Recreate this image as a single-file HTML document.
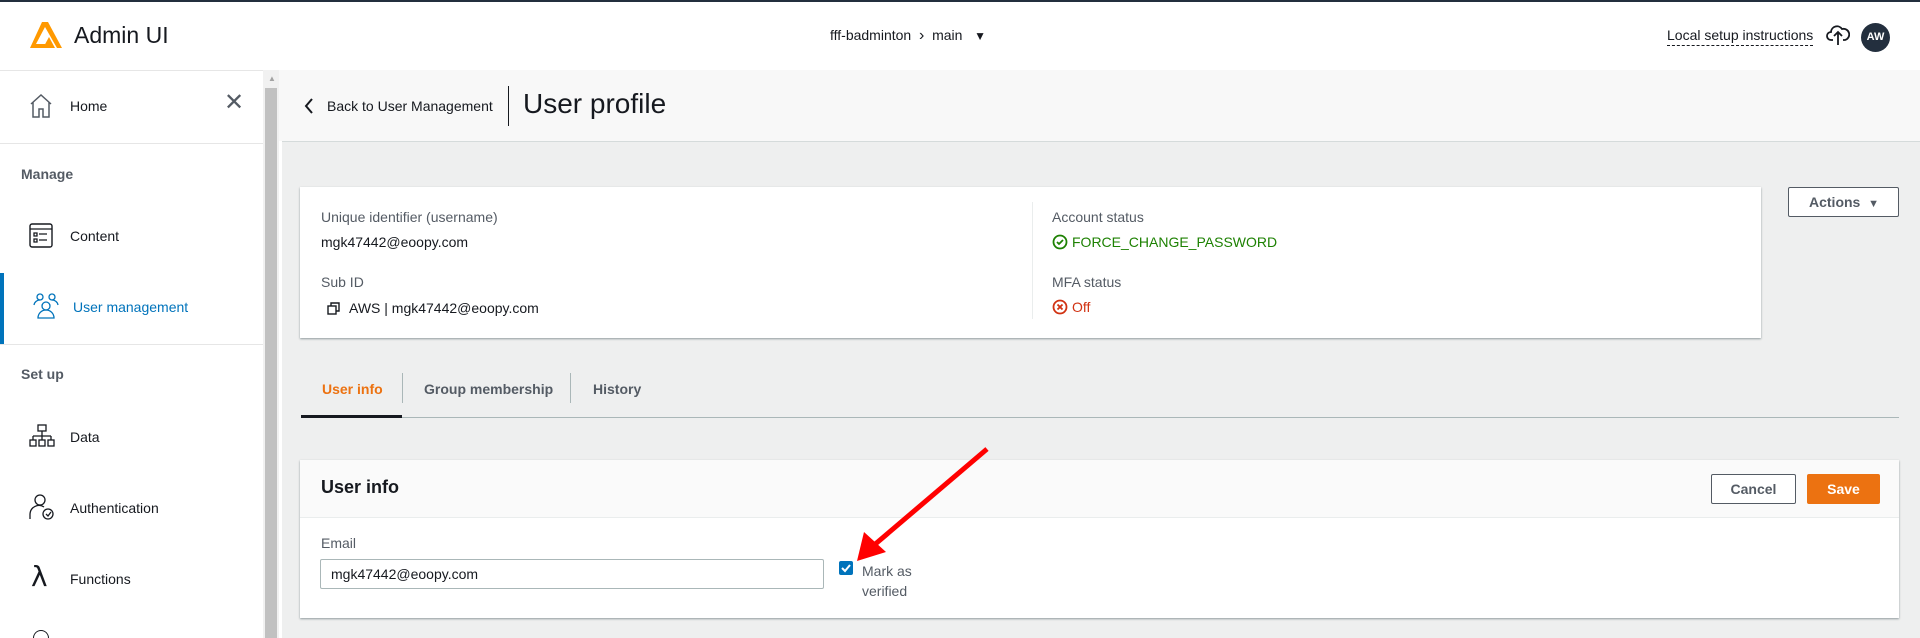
<!DOCTYPE html>
<html><head><meta charset="utf-8"><style>
*{box-sizing:border-box;margin:0;padding:0}
body{width:1920px;height:638px;overflow:hidden;background:#fff;font-family:"Liberation Sans",sans-serif;color:#16191f;font-size:14px;position:relative}
.a{position:absolute;white-space:nowrap}
.lbl{color:#545b64}
</style></head><body>
<div class="a" style="left:0;top:0;width:1920px;height:2px;background:#232f3e"></div>
<!-- header -->
<svg class="a" style="left:30px;top:22px" width="32" height="26" viewBox="0 0 32 26"><path d="M12 0h6l14 26h-5L15 5 6 22h9l2 4H0z" fill="#f90"/><path d="M13 26l6-11 6 11z" fill="#f90"/></svg>
<div class="a" style="left:74px;top:22px;font-size:23px;color:#16191f">Admin UI</div>
<div class="a" style="left:830px;top:27px;font-size:14px;color:#16191f">fff-badminton &nbsp;<span style="font-size:16px">&#8250;</span>&nbsp; main &nbsp;&nbsp;<span style="font-size:12px">&#9660;</span></div>
<div class="a" style="left:1667px;top:27px;font-size:14px;border-bottom:1px dashed #16191f;padding-bottom:2px">Local setup instructions</div>
<svg class="a" style="left:1826px;top:24px" width="24" height="22" viewBox="0 0 24 22"><path d="M7 16H5a4 4 0 0 1 0-8 6 6 0 0 1 11-3 5 5 0 0 1 3 11h-2" fill="none" stroke="#16191f" stroke-width="1.8"/><path d="M12 21V9M8 12l4-4 4 4" fill="none" stroke="#16191f" stroke-width="1.8"/></svg>
<div class="a" style="left:1861px;top:23px;width:29px;height:29px;border-radius:50%;background:#232f3e;color:#fff;font-size:11px;font-weight:bold;text-align:center;line-height:29px">AW</div>
<!-- sidebar -->
<div class="a" style="left:0;top:70px;width:263px;height:1px;background:#e6e6e6"></div>
<div class="a" style="left:263px;top:70px;width:16px;height:568px;background:#f1f1f1"></div>
<div class="a" style="left:265px;top:88px;width:12px;height:550px;background:#c1c1c1"></div>
<div class="a" style="left:268px;top:74px;font-size:8px;color:#a3a3a3">&#9650;</div>
<svg class="a" style="left:29px;top:93px" width="24" height="25" viewBox="0 0 24 25"><path d="M2 11L12 2l10 9M4 9v15h6v-8h4v8h6V9" fill="none" stroke="#545b64" stroke-width="1.5"/></svg>
<div class="a" style="left:70px;top:98px;font-size:14px">Home</div>
<div class="a" style="left:224px;top:88px;font-size:24px;color:#545b64">&#10005;</div>
<div class="a" style="left:0;top:143px;width:263px;height:1px;background:#e6e6e6"></div>
<div class="a" style="left:21px;top:166px;font-size:14px;color:#545b64;font-weight:bold">Manage</div>
<svg class="a" style="left:29px;top:223px" width="24" height="25" viewBox="0 0 24 25"><rect x="1" y="1" width="22" height="23" rx="2" fill="none" stroke="#16191f" stroke-width="1.4"/><path d="M1 6h22M5 10h3v3H5zM5 16h3v3H5zM10 11h8M10 17h8" fill="none" stroke="#16191f" stroke-width="1.3"/></svg>
<div class="a" style="left:70px;top:228px;font-size:14px">Content</div>
<div class="a" style="left:0;top:273px;width:4px;height:71px;background:#0073bb"></div>
<svg class="a" style="left:33px;top:293px" width="26" height="26" viewBox="0 0 26 26"><g fill="none" stroke="#0073bb" stroke-width="1.3"><circle cx="7" cy="4" r="3"/><circle cx="19" cy="4" r="3"/><circle cx="13" cy="13" r="4"/><path d="M1 12a6 6 0 0 1 6-5M25 12a6 6 0 0 0-6-5M5 25a8 8 0 0 1 16 0z"/></g></svg>
<div class="a" style="left:73px;top:299px;font-size:14px;color:#0073bb">User management</div>
<div class="a" style="left:0;top:344px;width:263px;height:1px;background:#e6e6e6"></div>
<div class="a" style="left:21px;top:366px;font-size:14px;color:#545b64;font-weight:bold">Set up</div>
<svg class="a" style="left:29px;top:424px" width="26" height="24" viewBox="0 0 26 24"><g fill="none" stroke="#16191f" stroke-width="1.3"><rect x="9" y="1" width="8" height="6"/><path d="M13 7v5M4 12h18M4 12v4M13 12v4M22 12v4"/><rect x="1" y="16" width="6" height="6"/><rect x="10" y="16" width="6" height="6"/><rect x="19" y="16" width="6" height="6"/></g></svg>
<div class="a" style="left:70px;top:429px;font-size:14px">Data</div>
<svg class="a" style="left:29px;top:494px" width="26" height="26" viewBox="0 0 26 26"><g fill="none" stroke="#16191f" stroke-width="1.3"><circle cx="11" cy="6" r="5"/><path d="M1 25v-5a9 9 0 0 1 14-7"/><circle cx="19" cy="20" r="5"/><path d="M17 20l2 2 3-4"/></g></svg>
<div class="a" style="left:70px;top:500px;font-size:14px">Authentication</div>
<div class="a" style="left:31px;top:560px;font-size:28px;font-family:'DejaVu Sans',sans-serif">&#955;</div>
<div class="a" style="left:70px;top:571px;font-size:14px">Functions</div>
<div class="a" style="left:33px;top:630px;width:16px;height:8px;border:1.3px solid #16191f;border-bottom:none;border-radius:8px 8px 0 0"></div>
<!-- page header -->
<div class="a" style="left:279px;top:70px;width:1641px;height:71px;background:#f8f8f8"></div>
<div class="a" style="left:279px;top:141px;width:1641px;height:497px;background:#eeefef;border-top:1px solid #d5dbdb"></div>
<div class="a" style="left:279px;top:141px;width:3px;height:497px;background:#fff"></div>
<svg class="a" style="left:304px;top:98px" width="10" height="16" viewBox="0 0 10 16"><path d="M8 1L2 8l6 7" fill="none" stroke="#16191f" stroke-width="2"/></svg>
<div class="a" style="left:327px;top:98px;font-size:14px">Back to User Management</div>
<div class="a" style="left:508px;top:86px;width:1px;height:40px;background:#16191f"></div>
<div class="a" style="left:523px;top:88px;font-size:28px">User profile</div>
<!-- card -->
<div class="a" style="left:300px;top:187px;width:1461px;height:151px;background:#fff;box-shadow:0 1px 2px rgba(0,28,36,.4)"></div>
<div class="a lbl" style="left:321px;top:209px">Unique identifier (username)</div>
<div class="a" style="left:321px;top:234px">mgk47442@eoopy.com</div>
<div class="a lbl" style="left:321px;top:274px">Sub ID</div>
<svg class="a" style="left:327px;top:302px" width="13" height="13" viewBox="0 0 13 13"><g fill="none" stroke="#16191f" stroke-width="1.4"><rect x="1" y="4" width="8" height="8"/><path d="M4 4V1h8v8H9"/></g></svg>
<div class="a" style="left:349px;top:300px">AWS | mgk47442@eoopy.com</div>
<div class="a" style="left:1032px;top:202px;width:1px;height:117px;background:#eaeded"></div>
<div class="a lbl" style="left:1052px;top:209px">Account status</div>
<svg class="a" style="left:1052px;top:234px" width="16" height="16" viewBox="0 0 16 16"><circle cx="8" cy="8" r="6.5" fill="none" stroke="#1d8102" stroke-width="1.8"/><path d="M5 8l2 2 4-4" fill="none" stroke="#1d8102" stroke-width="1.8"/></svg>
<div class="a" style="left:1072px;top:234px;color:#1d8102">FORCE_CHANGE_PASSWORD</div>
<div class="a lbl" style="left:1052px;top:274px">MFA status</div>
<svg class="a" style="left:1052px;top:299px" width="16" height="16" viewBox="0 0 16 16"><circle cx="8" cy="8" r="6.5" fill="none" stroke="#d13212" stroke-width="1.8"/><path d="M5.5 5.5l5 5M10.5 5.5l-5 5" stroke="#d13212" stroke-width="1.8"/></svg>
<div class="a" style="left:1072px;top:299px;color:#d13212">Off</div>
<div class="a" style="left:1788px;top:187px;width:111px;height:30px;border:1px solid #545b64;border-radius:2px;background:#fff;color:#545b64;font-weight:bold;font-size:14px;line-height:28px;padding-left:20px">Actions &nbsp;<span style="font-size:11px">&#9660;</span></div>
<!-- tabs -->
<div class="a" style="left:322px;top:381px;color:#ec7211;font-weight:bold">User info</div>
<div class="a" style="left:402px;top:373px;width:1px;height:30px;background:#aab7b8"></div>
<div class="a" style="left:424px;top:381px;color:#545b64;font-weight:bold">Group membership</div>
<div class="a" style="left:570px;top:373px;width:1px;height:30px;background:#aab7b8"></div>
<div class="a" style="left:593px;top:381px;color:#545b64;font-weight:bold">History</div>
<div class="a" style="left:301px;top:417px;width:1598px;height:1px;background:#aab7b8"></div>
<div class="a" style="left:301px;top:415px;width:101px;height:3px;background:#16191f"></div>
<!-- panel -->
<div class="a" style="left:300px;top:460px;width:1599px;height:158px;background:#fff;box-shadow:0 1px 2px rgba(0,28,36,.4)"></div>
<div class="a" style="left:300px;top:460px;width:1599px;height:58px;background:#fafafa;border-bottom:1px solid #eaeded"></div>
<div class="a" style="left:321px;top:477px;font-size:18px;font-weight:bold">User info</div>
<div class="a" style="left:1711px;top:474px;width:85px;height:30px;border:1px solid #545b64;border-radius:2px;background:#fff;color:#545b64;font-weight:bold;text-align:center;line-height:28px">Cancel</div>
<div class="a" style="left:1807px;top:474px;width:73px;height:30px;border-radius:2px;background:#ec7211;color:#fff;font-weight:bold;text-align:center;line-height:30px">Save</div>
<div class="a lbl" style="left:321px;top:535px">Email</div>
<div class="a" style="left:320px;top:559px;width:504px;height:30px;border:1px solid #aab7b8;border-radius:2px;background:#fff;padding-left:10px;line-height:28px">mgk47442@eoopy.com</div>
<div class="a" style="left:839px;top:561px;width:14px;height:14px;border-radius:2px;background:#0073bb"></div>
<svg class="a" style="left:839px;top:561px" width="14" height="14" viewBox="0 0 14 14"><path d="M3 7l3 3 5-6" fill="none" stroke="#fff" stroke-width="2"/></svg>
<div class="a" style="left:862px;top:561px;color:#545b64;line-height:20px;white-space:normal">Mark as<br>verified</div>
<!-- arrow -->
<svg class="a" style="left:840px;top:440px" width="160" height="130" viewBox="840 440 160 130"><line x1="987" y1="449" x2="873" y2="546" stroke="#f00" stroke-width="5"/><polygon points="857,561 864,532 886,552" fill="#f00"/></svg>
</body></html>
